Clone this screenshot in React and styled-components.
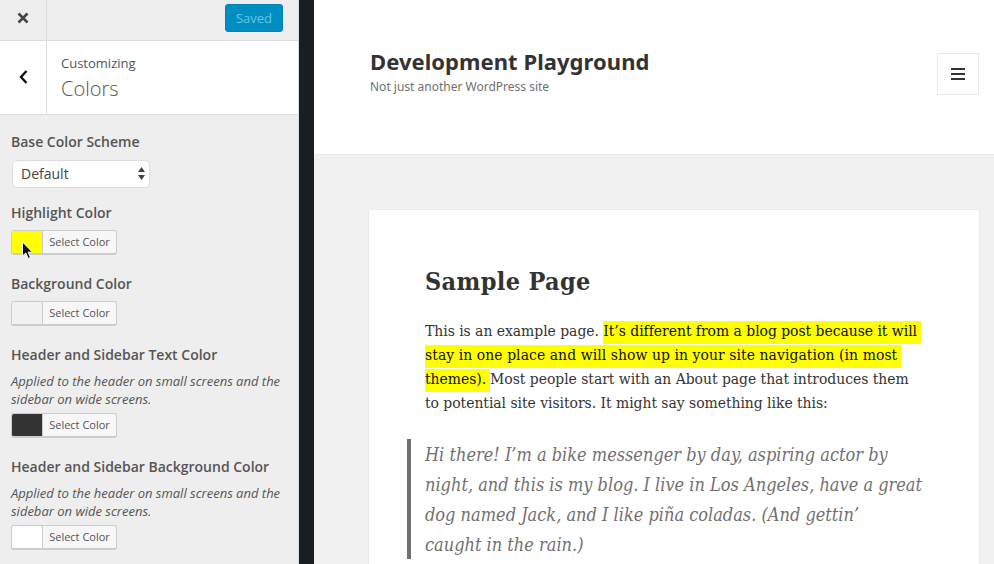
import React from "react";
import styled, { createGlobalStyle } from "styled-components";

const Global = createGlobalStyle`
  html, body { margin: 0; padding: 0; height: 100%; overflow: hidden; background: #fff; }
  * { box-sizing: border-box; }
`;

const Page = styled.div`
  display: flex;
  width: 994px;
  height: 564px;
  overflow: hidden;
  position: relative;
`;

const Sidebar = styled.aside`
  width: 299px;
  flex: none;
  background: #eeeeee;
  border-right: 1px solid #ddd;
  font-family: "Open Sans", sans-serif;
  color: #555d66;
  display: flex;
  flex-direction: column;
`;

const Divider = styled.div`
  width: 15px;
  flex: none;
  background: #191e23;
`;

const TopBar = styled.div`
  height: 41px;
  flex: none;
  display: flex;
  align-items: stretch;
  justify-content: space-between;
  border-bottom: 1px solid #ddd;
`;

const IconCell = styled.div`
  width: 47px;
  flex: none;
  display: flex;
  align-items: center;
  justify-content: center;
  border-right: 1px solid #ddd;
  padding-bottom: ${p => p.$lift || 0}px;
  color: #444;
`;

const SavedButton = styled.div`
  width: 58px;
  height: 28px;
  margin: 4px 15px 0 0;
  border-radius: 3px;
  background: #008ec2;
  border: 1px solid #0085ba;
  color: #66c6e4;
  font-size: 13px;
  line-height: 26px;
  text-align: center;
`;

const TitleBar = styled.div`
  height: 74px;
  flex: none;
  display: flex;
  background: #fff;
  border-bottom: 1px solid #ddd;
`;

const TitleText = styled.div`
  padding: 13px 0 0 14px;
`;

const TitleSmall = styled.div`
  font-size: 13px;
  line-height: 18px;
  color: #555;
`;

const TitleLarge = styled.div`
  font-size: 20px;
  font-weight: 300;
  line-height: 30px;
  margin-top: 2px;
  color: #555;
`;

const Controls = styled.div`
  padding: 19px 0 0 11px;
`;

const Control = styled.section`
  margin-bottom: ${p => p.$gap}px;
`;

const Label = styled.div`
  font-size: 14px;
  font-weight: 600;
  line-height: 16px;
  color: #555;
`;

const Description = styled.div`
  font-size: 13px;
  font-style: italic;
  line-height: 18px;
  color: #555;
  margin-top: 9px;
  width: 282px;
`;

const SelectBox = styled.div`
  width: 138px;
  height: 28px;
  margin: 10px 0 0 1px;
  background: #fff;
  border: 1px solid #ddd;
  border-radius: 5px;
  font-size: 14px;
  padding: 0 0 2px 8px;
  color: #444;
  display: flex;
  justify-content: space-between;
  align-items: center;
`;

const SelectArrows = styled.svg`
  width: 7px;
  height: 13px;
  margin-right: 4px;
`;

const ColorButton = styled.div`
  width: 106px;
  height: 25px;
  margin-top: ${p => p.$top}px;
  display: flex;
  background: #f7f7f7;
  border: 1px solid #ccc;
  border-bottom: 2px solid #ccc;
  border-radius: 3px;
  overflow: hidden;
`;

const Swatch = styled.div`
  width: 31px;
  flex: none;
  background: ${p => p.$color};
  border-right: 1px solid #ccc;
`;

const SwatchLabel = styled.div`
  flex: 1;
  font-size: 11px;
  line-height: 22px;
  text-align: center;
  color: #555;
`;

const Cursor = styled.svg`
  position: absolute;
  left: 21px;
  top: 241px;
  width: 13px;
  height: 19px;
`;

const Preview = styled.main`
  flex: 1;
  min-width: 0;
  background: #f1f1f1;
  display: flex;
  flex-direction: column;
`;

const SiteHeader = styled.header`
  height: 155px;
  flex: none;
  background: #fff;
  border-bottom: 1px solid #eaeaea;
  padding: 45px 15px 0 56px;
  display: flex;
  justify-content: space-between;
  align-items: flex-start;
`;

const SiteName = styled.div`
  font-family: "Noto Sans", sans-serif;
  font-size: 22px;
  font-weight: 700;
  line-height: 32px;
  letter-spacing: 0.05px;
  color: #333;
`;

const SiteTagline = styled.div`
  font-family: "Noto Sans", sans-serif;
  font-size: 12px;
  line-height: 18px;
  margin-top: 1px;
  color: #707070;
`;

const MenuButton = styled.div`
  width: 42px;
  height: 42px;
  margin-top: 8px;
  border: 1px solid #eaeaea;
  display: flex;
  align-items: center;
  justify-content: center;
`;

const Card = styled.article`
  margin: 55px 15px 0 55px;
  flex: 1;
  background: #fff;
  box-shadow: 0 0 1px rgba(0, 0, 0, 0.15);
  padding: 54px 55px 0 56px;
  font-family: "DejaVu Serif", serif;
  font-stretch: condensed;
  color: #333;
`;

const PageTitle = styled.h1`
  margin: 0;
  font-size: 25px;
  line-height: 36px;
  font-weight: 700;
  letter-spacing: 0.35px;
  color: #333;
`;

const Body = styled.p`
  margin: 19px 0 0 0;
  font-size: 15.5px;
  line-height: 24px;
  letter-spacing: -0.03px;
  white-space: nowrap;
`;

const Mark = styled.span`
  background: #ffff00;
  color: #111;
  padding: 1px 4px 4px 0;
  letter-spacing: ${p => p.$track || "inherit"};
`;

const Quote = styled.blockquote`
  margin: 24px 0 0 -18px;
  padding-top: 1px;
  padding-left: 14px;
  height: 120px;
  border-left: 4px solid #707070;
  font-size: 18px;
  line-height: 30px;
  font-style: italic;
  color: #707070;
  white-space: nowrap;
`;

function SelectColor({ color, top = 9 }) {
  return (
    <ColorButton $top={top}>
      <Swatch $color={color} />
      <SwatchLabel>Select Color</SwatchLabel>
    </ColorButton>
  );
}

export default function App() {
  return (
    <Page>
      <Global />
      <Sidebar>
        <TopBar>
          <IconCell $lift={4}>
            <svg width="12" height="12" viewBox="0 0 12 12">
              <path d="M1.500 1.500l9 9M10.500 1.500l-9 9" stroke="#444" strokeWidth="2.600" fill="none" />
            </svg>
          </IconCell>
          <SavedButton>Saved</SavedButton>
        </TopBar>
        <TitleBar>
          <IconCell $lift={2}>
            <svg width="9" height="14" viewBox="0 0 9 14">
              <path d="M7.500 1L2 7l5.500 6" stroke="#111" strokeWidth="2.400" fill="none" />
            </svg>
          </IconCell>
          <TitleText>
            <TitleSmall>Customizing</TitleSmall>
            <TitleLarge>Colors</TitleLarge>
          </TitleText>
        </TitleBar>
        <Controls>
          <Control $gap={17}>
            <Label>Base Color Scheme</Label>
            <SelectBox>
              Default
              <SelectArrows viewBox="0 0 7 13">
                <path d="M3.500 0L7 5H0zM3.500 13L0 8h7z" fill="#444" />
              </SelectArrows>
            </SelectBox>
          </Control>
          <Control $gap={21}>
            <Label>Highlight Color</Label>
            <SelectColor color="#ffff00" />
          </Control>
          <Control $gap={21}>
            <Label>Background Color</Label>
            <SelectColor color="#f1f1f1" />
          </Control>
          <Control $gap={21}>
            <Label>Header and Sidebar Text Color</Label>
            <Description>Applied to the header on small screens and the sidebar on wide screens.</Description>
            <SelectColor color="#333333" top={5} />
          </Control>
          <Control $gap={0}>
            <Label>Header and Sidebar Background Color</Label>
            <Description>Applied to the header on small screens and the sidebar on wide screens.</Description>
            <SelectColor color="#ffffff" top={5} />
          </Control>
        </Controls>
      </Sidebar>
      <Divider />
      <Preview>
        <SiteHeader>
          <div>
            <SiteName>Development Playground</SiteName>
            <SiteTagline>Not just another WordPress site</SiteTagline>
          </div>
          <MenuButton>
            <svg width="14" height="12" viewBox="0 0 14 12">
              <path d="M0 1h14M0 6h14M0 11h14" stroke="#333" strokeWidth="2" fill="none" />
            </svg>
          </MenuButton>
        </SiteHeader>
        <Card>
          <PageTitle>Sample Page</PageTitle>
          <Body>
            This is an example page. <Mark>It’s different from a blog post because it will</Mark><br />
            <Mark $track="0.07px">stay in one place and will show up in your site navigation (in most</Mark><br />
            <Mark>themes).</Mark>Most people start with an About page that introduces them<br />
            to potential site visitors. It might say something like this:
          </Body>
          <Quote>
            Hi there! I’m a bike messenger by day, aspiring actor by<br />
            night, and this is my blog. I live in Los Angeles, have a great<br />
            dog named Jack, and I like piña coladas. (And gettin’<br />
            caught in the rain.)
          </Quote>
        </Card>
      </Preview>
      <Cursor viewBox="0 0 13 19">
        <path d="M1.500 1v14l3.300-3 2.400 5.500 2.300-1-2.400-5.300H11.500z" fill="#111" stroke="#fff" strokeWidth="1" />
      </Cursor>
    </Page>
  );
}
